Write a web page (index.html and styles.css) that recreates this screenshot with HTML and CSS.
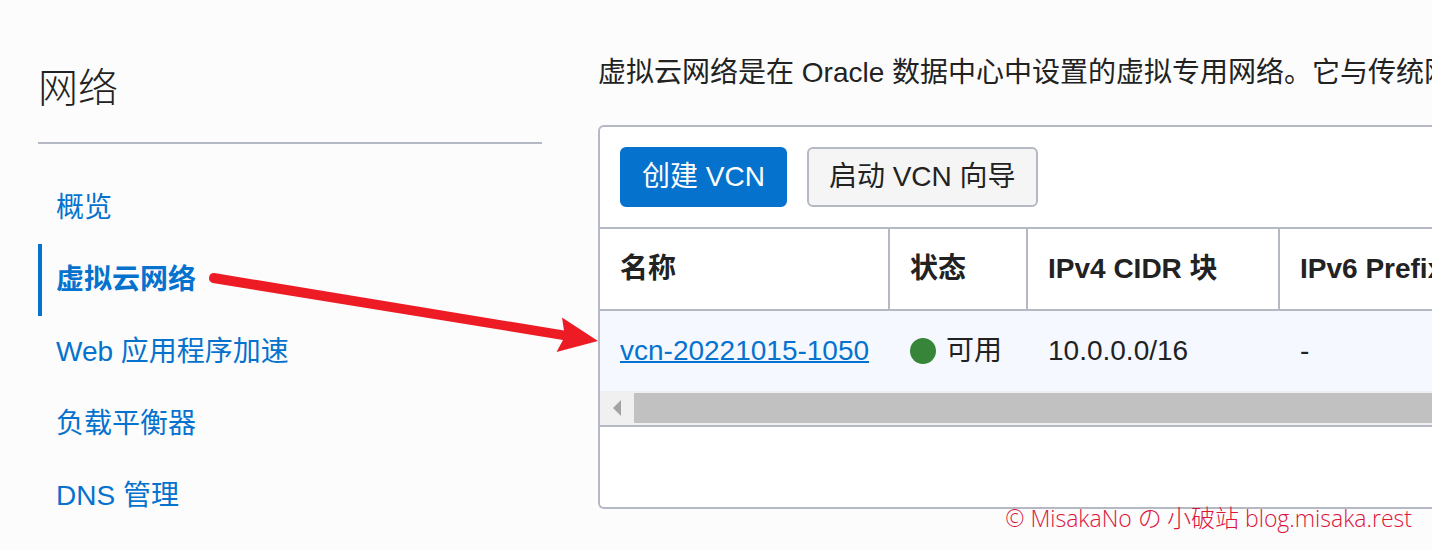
FILE: index.html
```html
<!DOCTYPE html>
<html lang="zh-CN">
<head>
<meta charset="utf-8">
<title>虚拟云网络</title>
<link rel="stylesheet" href="styles.css">
</head>
<body>
<div class="page">
  <aside class="sidebar">
    <h1 class="sidebar-title">网络</h1>
    <nav class="nav">
      <a class="nav-link" href="#">概览</a>
      <a class="nav-link active" href="#" aria-current="page">虚拟云网络</a>
      <a class="nav-link" href="#">Web 应用程序加速</a>
      <a class="nav-link" href="#">负载平衡器</a>
      <a class="nav-link" href="#">DNS 管理</a>
    </nav>
  </aside>
  <main class="main">
    <p class="intro">虚拟云网络是在 Oracle 数据中心中设置的虚拟专用网络。它与传统网</p>
    <section class="panel">
      <div class="toolbar">
        <button class="button primary" type="button">创建 VCN</button>
        <button class="button" type="button">启动 VCN 向导</button>
      </div>
      <table class="table">
        <thead>
          <tr>
            <th class="col-name" scope="col">名称</th>
            <th class="col-state" scope="col">状态</th>
            <th class="col-cidr" scope="col">IPv4 CIDR 块</th>
            <th scope="col">IPv6 Prefix</th>
          </tr>
        </thead>
        <tbody>
          <tr>
            <td><a class="vcn-link" href="#">vcn-20221015-1050</a></td>
            <td><span class="state"><span class="dot"></span>可用</span></td>
            <td>10.0.0.0/16</td>
            <td>-</td>
          </tr>
        </tbody>
      </table>
      <div class="scrollbar" aria-hidden="true">
        <svg class="scroll-arrow" width="34" height="34" viewBox="0 0 34 34"><path d="M21 9v16l-8-8z"/></svg>
        <div class="thumb"></div>
      </div>
      <div class="panel-footer"></div>
    </section>
  </main>
  <svg class="pointer" width="390" height="84" viewBox="208 270 390 84" aria-hidden="true">
    <path d="M214.300 273.100L564 330.500L562 317.500L598 341L556.500 352L563 340L212.700 282.900A5 5 0 0 1 214.300 273.100Z"/>
  </svg>
  <div class="watermark">© MisakaNo <span class="watermark-cjk">の 小破站</span> blog.misaka.rest</div>
</div>
</body>
</html>
```

FILE: styles.css
```css
* {
  box-sizing: border-box;
}

body {
  margin: 0;
  background: #fcfcfc;
  color: #222;
  font-family: "Liberation Sans", "Noto Sans CJK SC", sans-serif;
  font-size: 28px;
  line-height: 40px;
}

.page {
  position: relative;
  display: flex;
  gap: 56px;
  min-height: 100vh;
  padding-left: 38px;
  overflow: hidden;
}

.sidebar {
  flex: 0 0 504px;
}

.sidebar-title {
  margin: 0 0 28px;
  padding: 60px 0 26px;
  border-bottom: 2px solid #b4b9c4;
  font-size: 40px;
  font-weight: 300;
  line-height: 56px;
}

.nav {
  display: flex;
  flex-direction: column;
}

.nav-link {
  padding: 16px 14px;
  border-left: 4px solid transparent;
  color: #0572ce;
  text-decoration: none;
}

.nav-link.active {
  border-left-color: #0572ce;
  font-weight: 700;
}

.main {
  flex: 1;
  min-width: 0;
}

.intro {
  margin: 0;
  padding: 53px 0 32px;
  white-space: nowrap;
}

.panel {
  border: 2px solid #b4b9c4;
  border-right: 0;
  border-radius: 6px 0 0 6px;
  background: #fff;
}

.toolbar {
  display: flex;
  gap: 20px;
  padding: 20px;
}

.button {
  height: 60px;
  padding: 0 20px;
  border: 2px solid #b4b9c4;
  border-radius: 6px;
  background: #f5f5f5;
  color: #222;
  font: inherit;
  white-space: nowrap;
}

.button.primary {
  border-color: #0572ce;
  background: #0572ce;
  color: #fff;
}

.table {
  width: 100%;
  table-layout: fixed;
  border-spacing: 0;
  text-align: left;
  white-space: nowrap;
}

.table th,
.table td {
  padding: 20px;
}

.table th {
  border-top: 2px solid #b4b9c4;
  border-bottom: 2px solid #b4b9c4;
  border-right: 2px solid #b4b9c4;
}

.table th:last-child {
  padding-right: 0;
  border-right: 0;
}

.table td {
  background: #f5f9ff;
}

.col-name {
  width: 290px;
}

.col-state {
  width: 138px;
}

.col-cidr {
  width: 252px;
}

.vcn-link {
  color: #0572ce;
  text-decoration-thickness: 2px;
}

.state {
  display: flex;
  align-items: center;
  gap: 10px;
}

.dot {
  flex: none;
  width: 26px;
  height: 26px;
  border-radius: 50%;
  background: #368539;
}

.scrollbar {
  display: flex;
  background: #f0f0f0;
}

.scroll-arrow {
  flex: none;
  fill: #a3a3a3;
}

.thumb {
  flex: 1;
  margin: 2px 0;
  background: #c1c1c1;
}

.panel-footer {
  height: 82px;
  border-top: 2px solid #b4b9c4;
}

.pointer {
  position: absolute;
  top: 270px;
  left: 208px;
  fill: #ed1c24;
}

.watermark {
  position: absolute;
  right: 20px;
  top: 500px;
  color: #dc143c;
  font-family: "Open Sans", "Noto Sans CJK SC", sans-serif;
  font-size: 23px;
  font-weight: 300;
  line-height: 34px;
  white-space: nowrap;
}

.watermark-cjk {
  font-family: "Noto Sans CJK SC", sans-serif;
  font-size: 24px;
}
```
